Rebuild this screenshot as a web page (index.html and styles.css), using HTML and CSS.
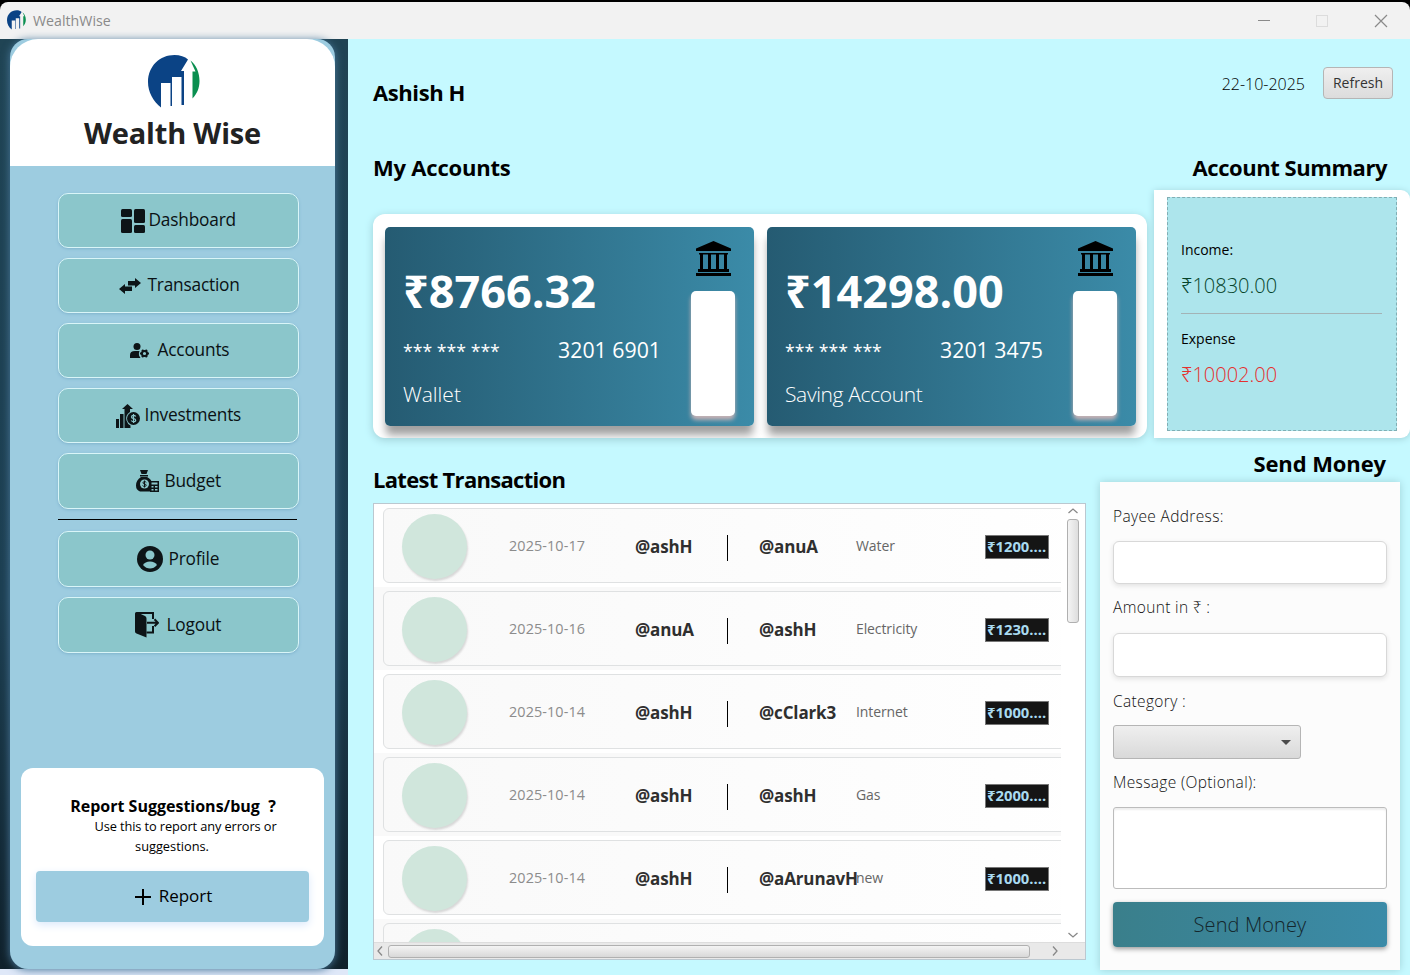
FILE: index.html
```html
<!DOCTYPE html>
<html lang="en">
<head>
<meta charset="utf-8">
<title>WealthWise</title>
<link rel="stylesheet" href="styles.css">
</head>
<body>
<svg class="defs" width="0" height="0">
  <defs>
    <symbol id="logo" viewBox="0 0 52 53">
      <path fill="#0b4385" d="M13 52.500C5 46 0 37 0 27 0 11 12 0 26.500 0 32 0 37 1.500 40 4.500L33 16H36V50H33.500V22H24V51H22.500V28H13Z"/>
      <path fill="#0a8f50" d="M42.500 5.500C48 10 51.500 17 51.500 26 51.500 33 49 39 44.500 43.500V16.500H47.500Z"/>
    </symbol>
    <symbol id="bank" viewBox="0 0 35 35">
      <path d="M17.500 0 35 7.500V10H0V7.500ZM3 12H32V13.500H31V28H33V31H2V28H4V13.500H3ZM7 13.500V28H12V13.500ZM15 13.500V28H20V13.500ZM23 13.500V28H28V13.500ZM0 32H35V35H0Z" fill-rule="evenodd"/>
    </symbol>
  </defs>
</svg>
<header class="titlebar">
  <svg class="titlebar-logo"><use href="#logo"/></svg>
  <span class="titlebar-name">WealthWise</span>
  <svg class="win-buttons" width="140" height="16" viewBox="0 0 140 16" fill="none">
    <path d="M8 7.500H20" stroke="#8a8a8a"/><rect x="66.500" y="2.500" width="11" height="11" stroke="#dcdcdc"/><path d="M125 2 137 14M137 2 125 14" stroke="#8a8a8a" stroke-width="1.200"/>
  </svg>
</header>
<main class="main">
  <aside class="sidebar">
    <div class="panel">
      <div class="brand">
        <svg class="brand-logo"><use href="#logo"/></svg>
        <div class="brand-name">Wealth Wise</div>
      </div>
      <nav class="nav">
        <a class="nav-btn"><svg class="i-dash" width="24" height="24" viewBox="0 0 24 24"><rect width="11" height="8" rx="1.500"/><rect y="10" width="11" height="14" rx="1.500"/><rect x="13" width="11" height="14" rx="1.500"/><rect x="13" y="16" width="11" height="8" rx="1.500"/></svg><span>Dashboard</span></a>
        <a class="nav-btn"><svg class="i-trans" width="22" height="16" viewBox="0 0 22 16"><path d="M9 3H16V0L22 5 16 10V7.500H9ZM13 13H6V16L0 11 6 6V8.500H13Z"/></svg><span>Transaction</span></a>
        <a class="nav-btn"><svg class="i-acc" width="20" height="16" viewBox="0 0 20 16"><circle cx="7" cy="3.500" r="3.500"/><path d="M0 15V12Q0 8 5 8H9.500Q8.500 10 9 12.500L10.500 15Z"/><path d="M10 10.500H19M12.200 6.700 16.800 14.300M16.800 6.700 12.200 14.300" stroke="#0d1417" stroke-width="2"/><circle cx="14.500" cy="10.500" r="2.600" fill="#8bc6cb" stroke="#0d1417" stroke-width="2"/></svg><span>Accounts</span></a>
        <a class="nav-btn"><svg class="i-inv" width="24" height="24" viewBox="0 0 24 24"><path d="M0 15H3V24H0ZM4 10H7.500V24H4ZM8.500 24V5H6L11.500 0 17 5H14V8Q9 11 10.500 16.500 11.500 20 14.500 21.500V24Z"/><circle cx="17.500" cy="14.500" r="6.500"/><path d="M19.800 12.500Q19 11.400 17.500 11.400 15.500 11.400 15.500 13 15.500 14.300 17.500 14.500 19.700 14.800 19.700 16.200 19.700 17.700 17.500 17.700 16 17.700 15.200 16.500M17.500 10V19" fill="none" stroke="#8bc6cb" stroke-width="1.200"/></svg><span>Investments</span></a>
        <a class="nav-btn tall"><svg class="i-bud" width="23" height="22" viewBox="0 0 23 22"><path d="M4 0H12L10.500 4H5.500ZM4 5H12V6.500H4Z"/><path d="M5 7H11Q15.500 9.500 15.500 12H14V21.500H4Q0 20 0 15.500 0 10 5 7Z"/><circle cx="8.500" cy="14" r="4.500" fill="#8bc6cb"/><path d="M10.300 12.500Q9.500 11.500 8.500 11.500 7 11.700 7 12.800 7 13.800 8.500 14 10.200 14.200 10.200 15.300 10 16.500 8.500 16.500 7.200 16.500 6.700 15.500M8.500 10.500V17.500" fill="none" stroke="#0d1417"/><path d="M14 11H23V22H14ZM15.500 12.500V14.500H21.500V12.500ZM15.500 16V17.500H17.500V16ZM19 16V17.500H21.500V16ZM15.500 19V20.500H17.500V19ZM19 19V20.500H21.500V19Z" fill-rule="evenodd"/></svg><span>Budget</span></a>
        <div class="nav-line"></div>
        <a class="nav-btn tall"><svg class="i-pro" width="26" height="26" viewBox="0 0 26 26"><circle cx="13" cy="13" r="13"/><circle cx="13" cy="9" r="4.500" fill="#8bc6cb"/><path d="M6 19Q8 15.500 13 15.500 18 15.500 20 19 17 22.500 13 22.500 9 22.500 6 19Z" fill="#8bc6cb"/></svg><span>Profile</span></a>
        <a class="nav-btn tall"><svg class="i-out" width="24" height="26" viewBox="0 0 24 26"><path d="M0 1.500Q0 0 1.500 0L10 4Q11.500 4.800 11.500 6.500V25.500L1.500 21.500Q0 21 0 19.500Z"/><path d="M1.500 1H18V7M18 14V20.500H11.500M12 10.800H23M19.500 7.300 23 10.800 19.500 14.300" fill="none" stroke="#0d1417" stroke-width="2"/></svg><span>Logout</span></a>
      </nav>
      <section class="report">
        <h3 class="report-title">Report Suggestions/bug &nbsp;?</h3>
        <p class="report-text"><span class="report-first">Use this to report any errors or</span><span>suggestions.</span></p>
        <a class="report-btn"><svg width="16" height="16" viewBox="0 0 16 16"><path d="M8 0V16M0 8H16" stroke="#000" stroke-width="2"/></svg><span>Report</span></a>
      </section>
    </div>
  </aside>
  <section class="content">
    <div class="topbar">
      <h2 class="user">Ashish H</h2>
      <div class="topbar-right"><span class="date">22-10-2025</span><button class="refresh">Refresh</button></div>
    </div>
    <div class="headings"><h2 class="h-acc">My Accounts</h2><h2 class="h-sum">Account Summary</h2></div>
    <div class="overview">
      <div class="accounts">
        <article class="card">
          <div class="card-info"><div class="balance">₹8766.32</div><div class="number"><span class="stars">*** *** ***</span><span>3201 6901</span></div><div class="card-name">Wallet</div></div>
          <div class="card-side"><svg class="bank"><use href="#bank"/></svg><div class="slot"></div></div>
        </article>
        <article class="card">
          <div class="card-info"><div class="balance">₹14298.00</div><div class="number"><span class="stars">*** *** ***</span><span>3201 3475</span></div><div class="card-name long">Saving Account</div></div>
          <div class="card-side"><svg class="bank"><use href="#bank"/></svg><div class="slot"></div></div>
        </article>
      </div>
      <div class="summary"><div class="summary-box">
        <div class="sum-label">Income:</div><div class="sum-value income">₹10830.00</div>
        <div class="sum-line"></div>
        <div class="sum-label">Expense</div><div class="sum-value expense">₹10002.00</div>
      </div></div>
    </div>
    <div class="lower">
      <div class="latest">
        <h2 class="h-latest">Latest Transaction</h2>
        <div class="table">
          <div class="rows">
            <div class="row"><div class="cell"><i class="dot"></i><span class="when">2025-10-17</span><b>@ashH</b><i class="bar"></i><b>@anuA</b><span class="cat">Water</span><span class="amt">₹1200....</span></div></div>
            <div class="row"><div class="cell"><i class="dot"></i><span class="when">2025-10-16</span><b>@anuA</b><i class="bar"></i><b>@ashH</b><span class="cat">Electricity</span><span class="amt">₹1230....</span></div></div>
            <div class="row"><div class="cell"><i class="dot"></i><span class="when">2025-10-14</span><b>@ashH</b><i class="bar"></i><b>@cClark3</b><span class="cat">Internet</span><span class="amt">₹1000....</span></div></div>
            <div class="row"><div class="cell"><i class="dot"></i><span class="when">2025-10-14</span><b>@ashH</b><i class="bar"></i><b>@ashH</b><span class="cat">Gas</span><span class="amt">₹2000....</span></div></div>
            <div class="row"><div class="cell"><i class="dot"></i><span class="when">2025-10-14</span><b>@ashH</b><i class="bar"></i><b>@aArunavH</b><span class="cat">new</span><span class="amt">₹1000....</span></div></div>
            <div class="row"><div class="cell"><i class="dot"></i></div></div>
          </div>
          <div class="vbar"><svg width="10" height="6"><path d="M.5 5 5 1 9.500 5" fill="none" stroke="#888" stroke-width="1.300"/></svg><i class="vthumb"></i><svg class="down" width="10" height="6"><path d="M.5 1 5 5 9.500 1" fill="none" stroke="#888" stroke-width="1.300"/></svg></div>
          <div class="hbar"><svg width="6" height="10"><path d="M5 .5 1 5 5 9.500" fill="none" stroke="#888" stroke-width="1.300"/></svg><i class="hthumb"></i><svg class="right" width="6" height="10"><path d="M1 .5 5 5 1 9.500" fill="none" stroke="#888" stroke-width="1.300"/></svg></div>
        </div>
      </div>
      <div class="send">
        <h2 class="h-send">Send Money</h2>
        <form class="form">
          <label>Payee Address:</label><div class="field f1"></div>
          <label>Amount in ₹ :</label><div class="field f2"></div>
          <label>Category :</label><div class="select"><svg width="10" height="5"><path d="M0 0H10L5 5Z" fill="#4b4b4b"/></svg></div>
          <label>Message (Optional):</label><div class="area"></div>
          <div class="send-btn"><span>Send Money</span></div>
        </form>
      </div>
    </div>
  </section>
</main>
</body>
</html>
```
FILE: styles.css
```css
* { box-sizing: border-box; }
body { margin: 0; width: 1410px; height: 975px; overflow: hidden; background: #000; color: #000; font-family: "Open Sans", "Noto Sans", sans-serif; display: flex; flex-direction: column; white-space: nowrap; }
h2, h3, p { margin: 0; }
.defs { position: absolute; }
.titlebar { height: 37px; margin-top: 2px; background: #f2f2f2; border-radius: 8px 8px 0 0; display: flex; align-items: center; padding: 0 20px 0 7px; flex: none; }
.titlebar-logo { width: 19px; height: 20px; margin-bottom: 2px; }
.titlebar-name { font-size: 14.200px; color: #8a8a8a; margin-left: 7px; }
.win-buttons { margin-left: auto; }
.main { display: flex; height: 936px; }
.sidebar { width: 348px; padding: 0 13px 6px 10px; background: linear-gradient(#204454, #1d3f52 60%, #10212b) 0 0 / 100% 930px no-repeat #dfe8f8; }
.panel { height: 930px; width: 325px; background: #9dcce0; border-radius: 18px; box-shadow: 0 1px 9px #4a7a9d; display: flex; flex-direction: column; align-items: center; }
.brand { width: 325px; height: 127px; background: #fff; border-radius: 28px 28px 0 0; display: flex; flex-direction: column; align-items: center; padding-top: 16px; }
.brand-logo { width: 52px; height: 53px; margin-left: 2px; }
.brand-name { font-weight: 700; font-size: 29px; line-height: 40px; letter-spacing: -.2px; color: #222; margin-top: 5px; }
.nav { margin: 27px 0 0 11px; display: flex; flex-direction: column; gap: 10px; width: 241px; }
.nav-btn { height: 55px; border: 1.500px solid #d9f5f8; border-radius: 10px; background: #8bc6cb; box-shadow: 0 1px 3px #7fb3cd; display: flex; align-items: center; font-size: 17.300px; letter-spacing: -.2px; color: #0a1114; }
.nav-btn svg { fill: #0d1417; flex: none; }
.nav-btn span { margin-bottom: 2px; }
.nav-btn.tall { height: 56px; }
.nav-line { height: 1px; background: #000; width: 239px; margin: 0 0 1px; }
.i-dash { margin: 0 4px 0 62px; }
.i-trans { margin: 0 7px 0 60px; }
.i-acc { margin: 0 8px 0 71px; }
.i-inv { margin: 0 5px 0 57px; }
.i-bud { margin: 0 6px 0 77px; }
.i-pro { margin: 0 6px 0 78px; }
.i-out { margin: 0 8px 0 76px; }
.report { margin-top: 115px; width: 303px; height: 178px; margin-right: 1px; border-radius: 12px; background: #fff; padding: 27px 15px 0; text-align: center; }
.report-title { font-size: 16px; line-height: 22px; padding-left: 2px; }
.report-text { font-size: 12.800px; line-height: 20px; display: flex; flex-direction: column; align-items: center; margin-top: -1px; }
.report-first { margin-left: 27px; letter-spacing: -.1px; }
.report-btn { margin-top: 15px; height: 51px; border-radius: 4px; background: #9dcce0; box-shadow: 0 3px 8px #dbe9fb; display: flex; align-items: center; justify-content: center; gap: 8px; font-size: 17px; padding-left: 3px; }
.report-btn span { margin-bottom: 2px; }
.content { flex: 1; background: #c5f9ff; padding-left: 25px; }
.content h2 { font-size: 22px; line-height: 30px; }
.topbar { height: 106px; display: flex; justify-content: space-between; padding: 28px 17px 0 0; }
.content .user { margin-top: 10px; letter-spacing: -.4px; }
.topbar-right { display: flex; align-items: center; gap: 18px; height: 32px; }
.date { font-size: 16px; font-weight: 300; margin-top: 2px; }
.refresh { width: 70px; height: 32px; padding: 0 0 2px; border: 1px solid #b5b5b5; border-radius: 4px; background: linear-gradient(#efefef, #dcdcdc); font: 14px "Open Sans"; color: #333; }
.headings { height: 45px; display: flex; justify-content: space-between; align-items: center; padding: 0 23px 1px 0; }
.content .h-acc { letter-spacing: -.2px; }
.content .h-sum { letter-spacing: -.45px; }
.overview { height: 248px; display: flex; gap: 7px; }
.accounts { margin-top: 24px; width: 774px; height: 224px; border-radius: 12px; background: #fff; box-shadow: 0 2px 9px #9fcfd6; padding: 13px 11px 0 12px; display: flex; gap: 13px; overflow: hidden; }
.card { width: 369px; height: 199px; border-radius: 5px; background: linear-gradient(90deg, #255b72, #3b8ba8); box-shadow: 0 10px 9px -1px #00000060; display: flex; justify-content: space-between; color: #fff; padding: 0 19px 0 18px; }
.card-info { padding-top: 34px; width: 260px; }
.balance { font-weight: 700; font-size: 45px; line-height: 60px; }
.number { display: flex; justify-content: space-between; font-size: 21.300px; line-height: 30px; margin-top: 14px; width: 258px; }
.stars { font-size: 17.700px; padding-top: 2px; line-height: 28px; }
.card-name { font-size: 21px; font-weight: 300; line-height: 30px; margin-top: 14px; }
.card-name.long { letter-spacing: -.35px; }
.card-side { padding-top: 14px; width: 44px; display: flex; flex-direction: column; align-items: center; }
.bank { width: 35px; height: 35px; margin-left: 1px; }
.slot { width: 44px; height: 125px; margin-top: 15px; border-radius: 5px; background: #fff; box-shadow: 0 4px 4px #c5b1b5; }
.summary { width: 256px; height: 248px; border-radius: 0 9px 9px 0; background: #fff; box-shadow: 0 1px 7px #9fcfd6; padding: 7px 13px; }
.summary-box { width: 230px; height: 234px; border: 1px dashed #80aeb4; background: #ade5ec; padding: 42px 14px 0 13px; }
.sum-label { font-size: 14px; line-height: 20px; }
.sum-value { font-size: 20px; font-weight: 300; line-height: 30px; margin-top: 11px; }
.income { color: #06442a; }
.expense { color: #e5302f; }
.sum-line { height: 1px; background: #a3b3b6; margin: 12px 0 15px; }
.lower { display: flex; gap: 14px; }
.content .h-latest { padding: 26px 0 9px; letter-spacing: -.7px; }
.table { position: relative; width: 713px; height: 457px; border: 1px solid #bbc8d0; background: #fff; overflow: hidden; }
.rows { width: 687px; height: 438px; overflow: hidden; }
.row { height: 83px; padding: 4px 0 0 9px; overflow: hidden; }
.row:nth-child(even) { background: #f9f9f9; }
.cell { width: 740px; height: 75px; border: 1.500px solid #dfe1e2; border-radius: 6px; background: linear-gradient(90deg, #f9f9f9, #fff); display: grid; grid-template-columns: 107px 126px 92px 32px 97px 129px 65px; align-items: center; padding-left: 18px; color: #2f2f2f; }
.cell b { font-size: 17px; letter-spacing: -.15px; padding-top: 2px; }
.dot { width: 65px; height: 65px; border-radius: 50%; background: #d0e6dc; box-shadow: 1px 2px 2px #d8d8d8; margin-top: 1px; }
.when { font-size: 14.400px; letter-spacing: .1px; color: #8c8c8c; }
.bar { width: 1px; height: 26px; background: #000; margin-top: 5px; }
.cat { font-size: 14px; letter-spacing: -.1px; color: #666; }
.amt { width: 64px; height: 24px; margin-top: 2px; border: 1px solid #777; background: #151515; color: #a9daf0; font-weight: 700; font-size: 14.800px; line-height: 21px; padding-left: 1px; }
.vbar { position: absolute; right: 1px; top: 0; width: 23px; height: 438px; background: #fff; display: flex; flex-direction: column; align-items: center; padding: 4px 0; }
.vthumb { width: 12px; height: 104px; margin-top: 5px; border: 1px solid #b0b0b0; border-radius: 3px; background: linear-gradient(90deg, #f4f4f4, #dedede); }
.down { margin-top: auto; }
.hbar { position: absolute; left: 0; bottom: 0; width: 711px; height: 17px; background: #e9e9e9; border-top: 1px solid #ddd; display: flex; align-items: center; padding: 0 27px 0 3px; }
.hthumb { width: 642px; height: 13px; margin-left: 5px; border: 1px solid #b0b0b0; border-radius: 3px; background: linear-gradient(#f4f4f4, #d8d8d8); }
.right { margin-left: auto; }
.send { width: 300px; }
.content .h-send { height: 44px; padding-top: 10px; padding-right: 14px; text-align: right; letter-spacing: -.1px; }
.form { width: 300px; height: 488px; background: #fcfcfc; box-shadow: 0 0 8px #9fd0d6; padding: 25px 13px 0; }
.form label { display: block; font-size: 15.500px; line-height: 20px; font-weight: 300; letter-spacing: .35px; color: #111; margin-top: -1px; }
.field { height: 43px; border: 1px solid #d8d8d8; border-radius: 6px; background: #fff; box-shadow: 0 2px 5px #e2e2e2; }
.f1 { margin: 15px 0 14px; }
.f2 { margin: 16px 0 15px; height: 44px; }
.select { width: 188px; height: 34px; margin: 14px 0; border: 1px solid #b5b5b5; border-radius: 3px; background: linear-gradient(#efefef, #d9d9d9); display: flex; align-items: center; justify-content: flex-end; padding-right: 9px; }
.area { height: 82px; margin-top: 15px; border: 1px solid #bcbcbc; border-radius: 3px; background: #fff; box-shadow: inset 0 2px 2px #eee; }
.send-btn { height: 45px; margin-top: 13px; border-radius: 4px; background: linear-gradient(90deg, #3a7f8b, #3b8ba8); box-shadow: 0 2px 5px #999; display: flex; align-items: center; justify-content: center; font-size: 20px; font-weight: 300; letter-spacing: .1px; color: #14262c; }
```
